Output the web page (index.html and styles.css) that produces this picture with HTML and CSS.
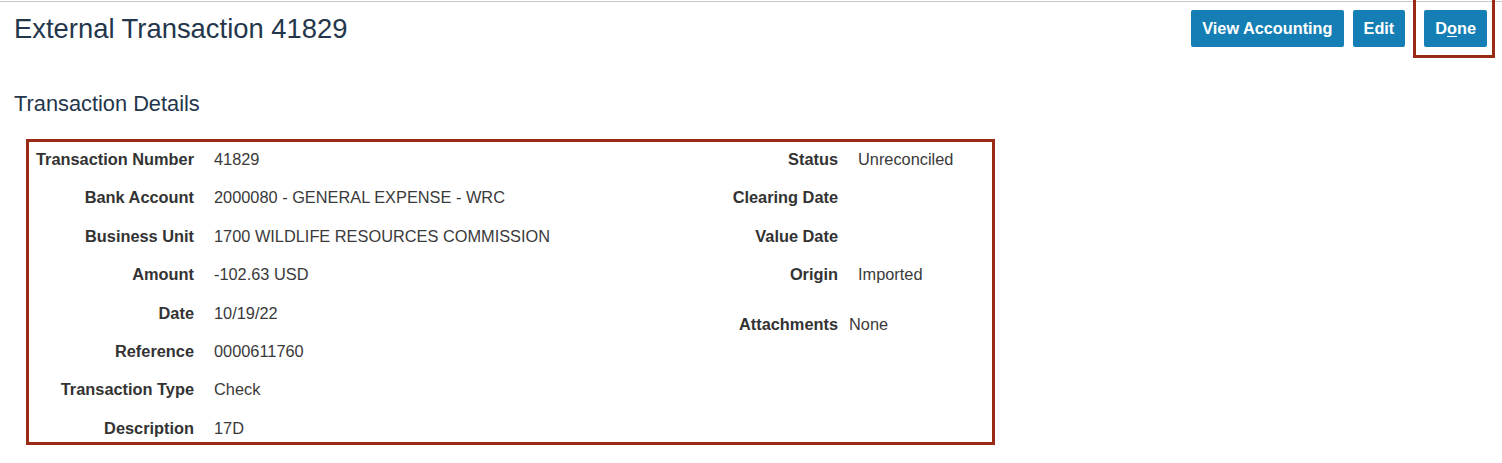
FILE: index.html
```html
<!DOCTYPE html>
<html lang="en">
<head>
<meta charset="utf-8">
<title>External Transaction 41829</title>
<link rel="stylesheet" href="styles.css">
</head>
<body>
<div class="page">
  <header class="header">
    <h1 class="title">External Transaction 41829</h1>
    <div class="actions">
      <button class="btn" type="button">View Accounting</button>
      <button class="btn" type="button">Edit</button>
      <span class="highlight-wrap"><button class="btn" type="button">D<u>o</u>ne</button></span>
    </div>
  </header>

  <h2 class="section-title">Transaction Details</h2>

  <div class="details">
    <div class="col col-left">
      <div class="lbl">Transaction Number</div><div class="val">41829</div>
      <div class="lbl">Bank Account</div><div class="val">2000080 - GENERAL EXPENSE - WRC</div>
      <div class="lbl">Business Unit</div><div class="val">1700 WILDLIFE RESOURCES COMMISSION</div>
      <div class="lbl">Amount</div><div class="val">-102.63&nbsp;USD</div>
      <div class="lbl">Date</div><div class="val">10/19/22</div>
      <div class="lbl">Reference</div><div class="val">0000611760</div>
      <div class="lbl">Transaction Type</div><div class="val">Check</div>
      <div class="lbl">Description</div><div class="val">17D</div>
    </div>
    <div class="col col-right">
      <div class="lbl">Status</div><div class="val">Unreconciled</div>
      <div class="lbl">Clearing Date</div><div class="val"></div>
      <div class="lbl">Value Date</div><div class="val"></div>
      <div class="lbl">Origin</div><div class="val">Imported</div>
      <div class="lbl attach">Attachments</div><div class="val attach attach-val">None</div>
    </div>
  </div>
</div>
</body>
</html>
```

FILE: styles.css
```css
html, body {
  margin: 0;
  padding: 0;
  background: #ffffff;
}

body {
  font-family: "Liberation Sans", Arial, sans-serif;
  color: #333333;
}

.page {
  margin-top: 1px;
  border-top: 1px solid #c9c9c9;
  min-height: 460px;
}

.header {
  display: flex;
  justify-content: space-between;
  align-items: flex-start;
  padding: 0 15px 0 14px;
}

.title {
  margin: 13px 0 0 0;
  font-size: 27.4px;
  line-height: 27px;
  font-weight: normal;
  color: #24364b;
}

.actions {
  display: flex;
  gap: 9px;
  margin-top: 8px;
}

.btn {
  height: 37px;
  padding: 0 11px;
  border: none;
  border-radius: 2px;
  background: #147eb5;
  color: #ffffff;
  font-family: "Liberation Sans", Arial, sans-serif;
  font-size: 16.3px;
  font-weight: bold;
}

.btn u {
  text-underline-offset: 2px;
}

.highlight-wrap {
  position: relative;
  display: block;
  margin-left: 10px;
}

.highlight-wrap::after {
  content: "";
  position: absolute;
  left: -11px;
  right: -8px;
  top: -14px;
  bottom: -11px;
  border: 3px solid #992b14;
  pointer-events: none;
}

.section-title {
  margin: 46px 0 0 14px;
  font-size: 21.8px;
  line-height: 22px;
  font-weight: normal;
  color: #24364b;
}

.details {
  display: flex;
  box-sizing: border-box;
  width: 969px;
  height: 306px;
  margin: 24px 0 0 26px;
  border: 3px solid #992b14;
  padding-top: 5px;
}

.col {
  display: grid;
  grid-auto-rows: 24px;
  row-gap: 14.4px;
  column-gap: 20px;
  align-content: start;
  font-size: 16.35px;
  line-height: 24px;
}

.col-left {
  width: 651px;
  grid-template-columns: 165px 1fr;
}

.col-right {
  grid-template-columns: 158px 1fr;
}

.lbl {
  text-align: right;
  font-weight: bold;
  color: #333333;
  white-space: nowrap;
}

.val {
  color: #3a3a3a;
  white-space: nowrap;
}

.attach {
  margin-top: 11px;
}

.attach-val {
  margin-left: -9px;
}
```
